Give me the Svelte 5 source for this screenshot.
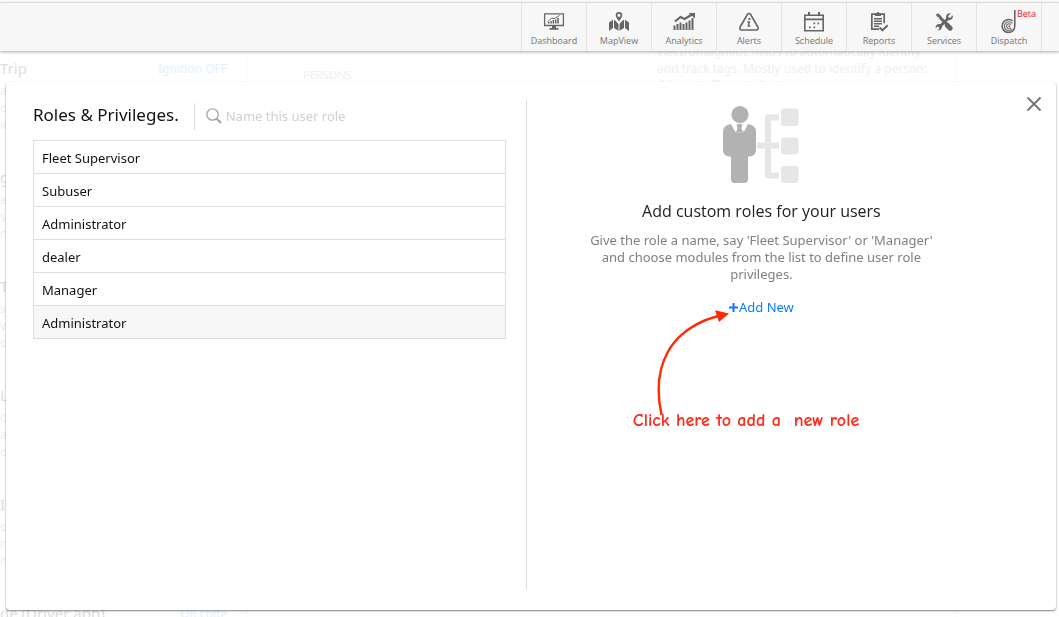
<script>
  let search = $state('');
  let selected = $state(5);

  const roles = ['Fleet Supervisor', 'Subuser', 'Administrator', 'dealer', 'Manager', 'Administrator'];

  const navItems = ['Dashboard', 'MapView', 'Analytics', 'Alerts', 'Schedule', 'Reports', 'Services', 'Dispatch'];

  // settings page that shows through behind the dialog
  const sections = [
    { title: 'Trip', lines: ['ac', 'o', 'in'], action: 'Ignition OFF' },
    { title: 'g', lines: ['e', 's', 'n'] },
    { title: 'Th', lines: ['s', 'v', 'o'] },
    { title: 'L', lines: ['d', 'ar', 'o'] },
    { title: 'I', lines: ['o', 'n', 'nt'] },
    { title: 'de (Driver app)', lines: [], action: 'QR code' }
  ];
</script>

<header class="topbar">
  <nav>
    {#each navItems as item}
      <a href="#{item.toLowerCase()}" class="nav-item">
        <svg width="24" height="24" viewBox="0 0 24 24" aria-hidden="true">
          {#if item === 'Dashboard'}
            <path d="M2.600 3.800h18.800v11.700H2.600z" fill="none" stroke="#666" stroke-width="1.300" />
            <path d="M10 16h4v2h2.500v1.800h-9V18H10z" />
            <path d="M6 13.500v-1.500h1.500v1.500zM8.300 13.500v-2.500h1.500v2.500zM10.600 13.500V10h1.500v3.500zM12.900 13.500V9.500h1.500v4zM15.200 13.500V8h1.600v5.500z" />
            <path d="M5.500 12l4-4 2.500 .8 5.500-3.300" fill="none" stroke="#666" stroke-width="1" />
          {:else if item === 'MapView'}
            <path d="M12 2a3.300 3.300 0 0 0-3.300 3.300c0 2 3.300 6 3.300 6s3.300-4 3.300-6A3.300 3.300 0 0 0 12 2zm0 1.700a1.600 1.600 0 1 1 0 3.200 1.600 1.600 0 0 1 0-3.200z" fill-rule="evenodd" />
            <path d="M2 12.500l4-2.800v8.400L2 21zM7 9.700l1.500 1 3 3.300v6.800L7 18zM12.500 14l3-3.300 1.500-1V18l-4.500 2.800zM18 9.700l4 2.800V21l-4-2.900z" />
          {:else if item === 'Analytics'}
            <path d="M1.500 15.500h2V20h-2zM4.500 14h2v6h-2zM7.500 12.500h2V20h-2zM10.500 14h2v6h-2zM13.500 12.500h2V20h-2zM16.500 10.500h2V20h-2zM19.500 8h2v12h-2z" />
            <path d="M3 11.500l5.500-4.500 4 2L20 4.500" fill="none" stroke="#666" stroke-width="2.200" />
            <path d="M16.500 3H23v5.500l-2-1.700z" />
          {:else if item === 'Alerts'}
            <path d="M10.300 4.600L3.100 17.200Q2.300 20 4.800 20h14.400q2.500 0 1.700-2.800L13.700 4.600Q12 2.400 10.300 4.600z" fill="none" stroke="#666" stroke-width="1.700" />
            <path d="M11.500 8h1.900v1.900h-1.900zM10.300 11.300h2.900l-.9 4.300h1.200v1.200h-3.100l.9-4.300h-1z" />
          {:else if item === 'Schedule'}
            <path d="M2.800 5.200h18.400v15.500H2.800z" fill="none" stroke="#666" stroke-width="1.600" />
            <path d="M6 2h2v4H6zM16 2h2v4h-2zM3 8.500h18v1.700H3zM11.500 12.500h1.700v1.700h-1.700zM15.500 12.500h1.700v1.700h-1.700zM7 16.500h1.700v1.700H7zM11.500 16.500h1.700v1.700h-1.700z" />
          {:else if item === 'Reports'}
            <path d="M12 19.200H4.800V4.200h12.400v9" fill="none" stroke="#666" stroke-width="1.700" />
            <path d="M8 3h1.700a1.400 1.400 0 0 1 2.600 0H14v3H8zM7 8h8v1.400H7zM7 10.500h8v1.400H7zM7 13h8v1.400H7zM7 15.500h5v1.400H7z" />
            <path d="M12.500 17.500l3 2.700 5.200-5" fill="none" stroke="#666" stroke-width="2" />
          {:else if item === 'Services'}
            <path d="M8 7.500l9.500 9.500" stroke="#666" stroke-width="3" />
            <path d="M15.200 15.200l3 3" stroke="#666" stroke-width="5" stroke-linecap="round" />
            <path d="M4 4.500l2-1.200 3.500 3-1.800 2-3-2z" />
            <path d="M16.500 8L7 17.500" stroke="#666" stroke-width="2.800" />
            <path d="M18.800 3.300l-2.700 2.600.5 1.500 1.500.5 2.600-2.600c.7 3-1.200 5.200-4.200 4.900l-2.500-2.500c-.2-3.300 1.800-5 4.800-4.400z" />
            <path d="M9.600 15.200c1.100 3-.7 5.500-3.900 5.100l2.100-2.200-.4-1.400-1.500-.4-2.200 2.100c-.5-3.200 2-5 5-4z" />
          {:else}
            <path d="M17.800 0v15.500c0 4.300-2.700 7-6.500 7a6.500 6.500 0 1 1 4.500-11.500" fill="none" stroke="#666" stroke-width="1.600" />
            <path d="M15.300 13.300a4.500 4.500 0 1 0 .1 5.800M14 14.600a2.500 2.500 0 1 0 0 3.300" fill="none" stroke="#666" stroke-width="1.100" />
            <circle cx="12.300" cy="16.200" r="1" />
          {/if}
        </svg>
        <span>{item}</span>
        {#if item === 'Dispatch'}<sup class="beta">Beta</sup>{/if}
      </a>
    {/each}
  </nav>
</header>

<main class="page">
  <div class="settings">
    {#each sections as section}
      <section>
        <div class="section-head">
          <h3>{section.title}</h3>
          {#if section.action}<a href="#edit">{section.action}</a>{/if}
        </div>
        {#each section.lines as line}
          <p>{line}</p>
        {/each}
      </section>
    {/each}
  </div>
  <div class="persons">PERSONS</div>
  <div class="help">
    <p>electromagnetic fields to automatically identify and track tags. Mostly used to identify a person: driver, staff or student.</p>
    <p>Import POI file etc.</p>
  </div>
</main>

<div class="dialog" role="dialog" aria-label="Roles & Privileges">
  <div class="roles-pane">
    <div class="roles-head">
      <h1>Roles &amp; Privileges.</h1>
      <label class="search">
        <svg width="16" height="16" viewBox="0 0 16 16" fill="none" stroke="#a5a5a5" aria-hidden="true">
          <circle cx="6.500" cy="6.500" r="5.700" stroke-width="1.300" />
          <path d="M10.700 10.700l4.500 4.300" stroke-width="2" />
        </svg>
        <input type="text" bind:value={search} placeholder="Name this user role" aria-label="Name this user role" />
      </label>
    </div>
    <ul class="role-list">
      {#each roles as role, i}
        <li>
          <button class:active={selected === i} onclick={() => (selected = i)}>{role}</button>
        </li>
      {/each}
    </ul>
  </div>

  <div class="intro-pane">
    <svg class="hero" width="76" height="80" viewBox="0 0 76 80" aria-hidden="true">
      <g fill="#b2b2b2">
        <circle cx="17" cy="9.500" r="8.600" />
        <path d="M8 19L12.500 27.500 14.200 19.500H19L20.700 27.500 25 19Q33 20 33 27V45Q33 50.500 27 51.500H25V74Q25 78 21 78H12Q8 78 8 74V51.500H6Q0 50.500 0 45V27Q0 20 8 19z" />
      </g>
      <path d="M10 18h13l-4 9.500h-5z" fill="#fff" />
      <path d="M13.500 19.500q3-1.500 6 0l-1 3.500 1.200 4.500h-6.400l1.200-4.500z" fill="#b2b2b2" />
      <g fill="#e6e6e6">
        <path d="M56 9.500H45Q42 9.500 42 12.500V37.500H34V43.500H42V70.500Q42 73.500 45 73.500H56V67.500H48V43.500H56V37.500H48V15.500H56z" />
        <rect x="58" y="3.500" width="17.500" height="17.500" rx="3" />
        <rect x="58" y="32.500" width="17.500" height="17" rx="3" />
        <rect x="58" y="61" width="17.500" height="17" rx="3" />
      </g>
    </svg>
    <h2>Add custom roles for your users</h2>
    <p>Give the role a name, say 'Fleet Supervisor' or 'Manager' and choose modules from the list to define user role privileges.</p>
    <div class="add-row">
      <button class="add-new">
        <svg width="9" height="9" viewBox="0 0 9 9" aria-hidden="true">
          <path d="M3.500 0h2v3.500H9v2H5.500V9h-2V5.500H0v-2h3.500z" fill="#0a7cff" />
        </svg>
        Add New
      </button>
      <div class="note">
        <svg width="106" height="110" viewBox="-6 0 106 110" aria-hidden="true">
          <path d="M29.500 106C19 57 38 20 86 7" fill="none" stroke="#ff2a00" stroke-width="2.400" />
          <path d="M97 4.500L83 1.200 87 13z" fill="#ff2a00" />
        </svg>
        <span>Click here to add a  new role</span>
      </div>
    </div>
  </div>

  <button class="close" aria-label="Close">
    <svg width="16" height="16" viewBox="0 0 16 16" aria-hidden="true">
      <path d="M1.500 1.500l13 13M14.500 1.500l-13 13" stroke="#777" stroke-width="2" />
    </svg>
  </button>
</div>

<style>
  :global(body) {
    background: #fff;
    font-family: "Noto Sans", "Open Sans", sans-serif;
    overflow: hidden;
  }

  h1, h2, h3, p, ul { margin: 0; padding: 0; font-weight: 400; }
  a { text-decoration: none; }
  button { font: inherit; border: none; background: none; padding: 0; cursor: pointer; }

  /* top bar */
  .topbar {
    position: relative;
    z-index: 2;
    margin-top: 2px;
    height: 48px;
    background: #f7f7f7;
    border-top: 1px solid #dcdcdc;
    box-shadow: 0 1px 3px rgba(0, 0, 0, 0.35);
  }
  nav {
    display: flex;
    justify-content: flex-end;
    height: 100%;
    padding-right: 17px;
  }
  .nav-item {
    position: relative;
    width: 64px;
    display: flex;
    flex-direction: column;
    align-items: center;
    padding-top: 7px;
    border-left: 1px solid #e2e2e2;
    color: #757575;
    font-family: "Open Sans", "Noto Sans", sans-serif;
    font-size: 9px;
    line-height: 12px;
  }
  .nav-item:last-child { border-right: 1px solid #e2e2e2; }
  .nav-item svg { fill: #666; }
  .nav-item span { margin-top: 1px; }
  .beta {
    position: absolute;
    top: 5px;
    right: 5px;
    color: #f02020;
    font-size: 9px;
    line-height: 12px;
  }

  /* page behind the dialog */
  .page {
    display: grid;
    grid-template-columns: 248px 1fr 322px 102px;
    height: 566px;
    overflow: hidden;
    font-size: 12px;
    line-height: 17px;
    color: #efefef;
  }
  .settings { border-right: 1px solid #fafafa; }
  section { height: 109px; padding-top: 4px; box-sizing: border-box; }
  .section-head {
    display: flex;
    justify-content: space-between;
    padding-right: 20px;
    line-height: 27px;
  }
  h3 { color: #dedede; font-size: 15px; }
  .section-head a { color: #e3f1ff; }
  .persons { padding: 15px 0 0 55px; font-size: 11px; }
  .help {
    display: flex;
    flex-direction: column;
    justify-content: space-between;
    padding: 0 20px 0 22px;
    border-right: 1px solid #fafafa;
  }
  .help p:first-child { margin-top: -8px; }

  /* dialog */
  .dialog {
    position: fixed;
    z-index: 1;
    inset: 82px 3px 7px 6px;
    display: flex;
    box-sizing: border-box;
    padding: 18px 0 20px;
    background: #fff;
    border-radius: 4px;
    box-shadow: 0 1px 2px rgba(0, 0, 0, 0.5);
  }
  .roles-pane {
    box-sizing: border-box;
    width: 49.6%;
    padding: 0 20px 0 27px;
    border-right: 1px solid #dedede;
  }
  .roles-head { display: flex; align-items: center; height: 30px; margin-bottom: 10px; }
  h1 { font-size: 17px; line-height: 28px; color: #111; }
  .search {
    display: flex;
    align-items: center;
    flex: 1;
    gap: 4px;
    margin: 2px 0 0 15px;
    padding-left: 11px;
    height: 27px;
    border-left: 1px solid #dedede;
  }
  .search input {
    flex: 1;
    min-width: 0;
    border: none;
    outline: none;
    padding: 0;
    font: inherit;
    font-size: 13px;
    background: none;
  }
  .search input::placeholder { color: #cfcfcf; }
  .role-list { list-style: none; border: 1px solid #dedede; }
  .role-list li + li { border-top: 1px solid #dedede; }
  .role-list button {
    display: block;
    width: 100%;
    height: 32px;
    padding: 2px 8px 0;
    text-align: left;
    font-size: 13px;
    color: #111;
  }
  .role-list button.active { background: #f7f7f7; }

  .intro-pane {
    flex: 1;
    display: flex;
    flex-direction: column;
    align-items: center;
    padding: 5px 60px 0 0;
    text-align: center;
  }
  h2 {
    margin-top: 14px;
    font-family: "Open Sans", "Noto Sans", sans-serif;
    font-size: 16px;
    line-height: 24px;
    color: #222;
  }
  .intro-pane p {
    max-width: 350px;
    margin-top: 9px;
    font-size: 13px;
    line-height: 17px;
    color: #808080;
  }
  .add-row { position: relative; margin-top: 15px; }
  .add-new {
    display: flex;
    align-items: center;
    gap: 1px;
    font-size: 13px;
    line-height: 18px;
    color: #0a7cff;
  }
  .note {
    position: absolute;
    top: 11px;
    left: 50%;
    margin-left: -135px;
    pointer-events: none;
    white-space: pre;
    text-align: left;
    color: #ff2a1a;
    font-family: "Comic Sans MS", "Comic Neue", "Open Sans", sans-serif;
    font-size: 18px;
    font-weight: 700;
    line-height: 22px;
  }
  .note svg { display: block; margin-bottom: -9px; }

  .close {
    position: absolute;
    top: 14px;
    right: 14px;
    width: 16px;
    height: 16px;
  }
  .close svg { display: block; }
</style>
